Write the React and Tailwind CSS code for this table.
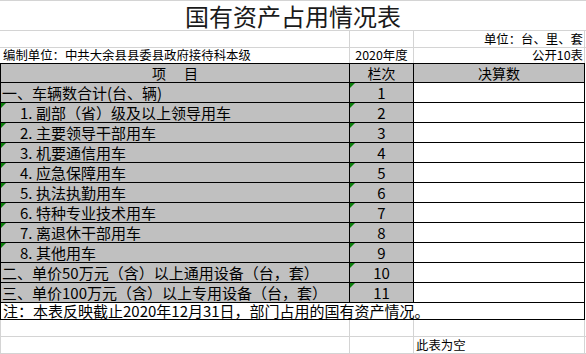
import React from 'react';

const Tri = () => (
  <svg className="absolute left-0 top-0" width="5" height="5" viewBox="0 0 5 5">
    <polygon points="0,0 5,0 0,5" fill="#0a7d0a" />
  </svg>
);

const rows = [
  { label: '一、车辆数合计(台、辆)', n: '1' },
  { num: '1.', label: '副部（省）级及以上领导用车', n: '2', tri: true },
  { num: '2.', label: '主要领导干部用车', n: '3', tri: true },
  { num: '3.', label: '机要通信用车', n: '4', tri: true },
  { num: '4.', label: '应急保障用车', n: '5', tri: true },
  { num: '5.', label: '执法执勤用车', n: '6', tri: true },
  { num: '6.', label: '特种专业技术用车', n: '7', tri: true },
  { num: '7.', label: '离退休干部用车', n: '8', tri: true },
  { num: '8.', label: '其他用车', n: '9', tri: true },
  { label: '二、单价50万元（含）以上通用设备（台，套）', n: '10' },
  { label: '三、单价100万元（含）以上专用设备（台，套）', n: '11' },
];

export default function App() {
  return (
    <div className="w-[586px] h-[354px] overflow-hidden bg-white text-black font-['Noto_Sans_CJK_SC',sans-serif]">
      {/* title */}
      <div className="h-[31px] border-t border-b border-[#d4d4d4] text-center text-[24px] leading-[29px] text-[#1a1a1a]">
        国有资产占用情况表
      </div>
      {/* row 2 */}
      <div className="h-[17px] border-b border-[#d4d4d4] flex pl-[1px] text-[12.4px] leading-[16px]">
        <div className="w-[349px] border-r border-[#d4d4d4]" />
        <div className="w-[64px] border-r border-[#d4d4d4]" />
        <div className="w-[171px] border-r border-[#d4d4d4] text-right pr-[1px]">单位：台、里、套</div>
      </div>
      {/* row 3 */}
      <div className="h-[15px] flex pl-[1px] text-[12.4px] leading-[15px]">
        <div className="w-[349px] border-r border-[#d4d4d4] pl-[2px] whitespace-nowrap">编制单位：中共大余县县委县政府接待科本级</div>
        <div className="w-[64px] border-r border-[#d4d4d4] text-center">2020年度</div>
        <div className="w-[171px] border-r border-[#d4d4d4] text-right pr-[1px]">公开10表</div>
      </div>
      {/* table */}
      <div className="w-[585px] border-t border-l border-black">
        <div className="h-[19px] flex border-b border-black text-[14px] leading-[18px]">
          <div className="w-[349px] border-r border-black bg-[#c0c0c0] flex justify-center gap-[18px]">
            <span>项</span>
            <span>目</span>
          </div>
          <div className="w-[64px] border-r border-black bg-[#c0c0c0] text-center">栏次</div>
          <div className="w-[171px] border-r border-black bg-[#c0c0c0] text-center">决算数</div>
        </div>
        {rows.map((r) => (
          <div key={r.n} className="h-[20px] flex border-b border-black text-[15px] leading-[19px]">
            <div className={`relative w-[349px] border-r border-black bg-[#c0c0c0] flex whitespace-nowrap ${r.num ? 'pl-[19px]' : 'pl-[1px]'}`}>
              {r.tri && <Tri />}
              {r.num && <span className="inline-block w-[16px]">{r.num}</span>}
              <span>{r.label}</span>
            </div>
            <div className="relative w-[64px] border-r border-black bg-[#c0c0c0] text-center">
              <Tri />
              {r.n}
            </div>
            <div className="w-[171px] border-r border-black bg-white" />
          </div>
        ))}
        <div className="h-[17px] border-b border-r border-black pl-[2px] text-[15px] leading-[16px] whitespace-nowrap">
          注：本表反映截止2020年12月31日，部门占用的国有资产情况。
        </div>
      </div>
      {/* blank rows */}
      <div className="h-[17px] flex border-b border-l border-[#d4d4d4]">
        <div className="w-[349px] border-r border-[#d4d4d4]" />
        <div className="w-[64px] border-r border-[#d4d4d4]" />
        <div className="w-[171px] border-r border-[#d4d4d4]" />
      </div>
      <div className="h-[17px] flex border-b border-l border-[#d4d4d4] text-[12.4px] leading-[15px]">
        <div className="w-[349px] border-r border-[#d4d4d4]" />
        <div className="w-[64px] border-r border-[#d4d4d4]" />
        <div className="w-[171px] border-r border-[#d4d4d4] pt-[1px] pl-[2px]">此表为空</div>
      </div>
    </div>
  );
}
